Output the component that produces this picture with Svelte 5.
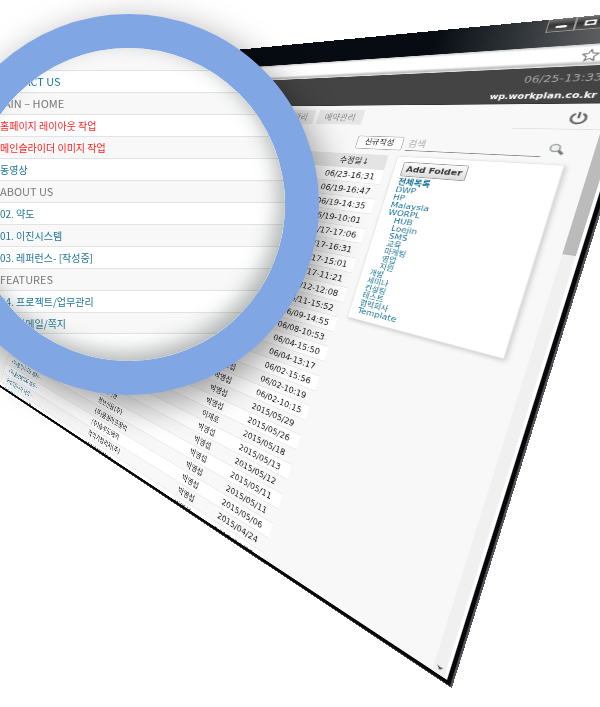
<script>
  // Maps a flat w x h plane onto four corners and returns a CSS matrix3d.
  function project(w, h, [x0, y0], [x1, y1], [x2, y2], [x3, y3]) {
    const dx1 = x1 - x2, dx2 = x3 - x2, sx = x0 - x1 + x2 - x3;
    const dy1 = y1 - y2, dy2 = y3 - y2, sy = y0 - y1 + y2 - y3;
    const det = dx1 * dy2 - dx2 * dy1;
    const g = (sx * dy2 - dx2 * sy) / det;
    const k = (dx1 * sy - sx * dy1) / det;
    const m = [
      (x1 - x0 + g * x1) / w, (y1 - y0 + g * y1) / w, 0, g / w,
      (x3 - x0 + k * x3) / h, (y3 - y0 + k * y3) / h, 0, k / h,
      0, 0, 1, 0,
      x0, y0, 0, 1
    ];
    return `matrix3d(${m.map((n) => n.toFixed(9)).join(',')})`;
  }

  const tilt = project(1220, 790, [27, 70], [662, 9], [450, 686], [-60, 347]);

  const dates = [
    '06/23-16:31', '06/19-16:47', '06/19-14:35', '06/19-10:01', '06/17-17:06',
    '06/17-16:31', '06/17-15:01', '06/17-11:21', '06/12-12:08', '06/11-15:52',
    '06/09-14:55', '06/08-10:53', '06/04-15:50', '06/04-13:17', '06/02-15:56',
    '06/02-10:19', '06/02-10:15', '2015/05/29', '2015/05/26', '2015/05/18',
    '2015/05/13', '2015/05/12', '2015/05/11', '2015/05/11', '2015/05/06',
    '2015/04/24', '2015/04/22'
  ];
  const firms = { 21: '(주)기영', 22: '정보신용(주)', 23: '(주)홍경마포장비', 24: '(주)솔루도메카', 25: '학익기정리지(주)', 26: '(주)아이엠에스' };
  const links = { 23: '(주)창기사이트 제작···', 24: '(주)홍보페이지 제작··', 25: '학익기정리지 제작···', 26: '홈페이지 리뉴얼 제작' };
  const rows = dates.map((date, i) => ({
    date,
    link: links[i] ?? '',
    firm: firms[i] ?? '',
    author: i < 14 ? '' : i === 19 ? '이재호' : '박영섭'
  }));

  const folders = [
    ['전체목록', 'all'], ['DWP'], ['HP'], ['Malaysia'], ['WORPL'],
    ['HUB', 'sub'], ['Loejin', 'sub'], ['SMS', 'sub'], ['교육', 'sub ko'],
    ['마케팅', 'sub ko'], ['영업', 'sub ko'], ['지원', 'sub ko'],
    ['개발', 'ko'], ['세미나', 'ko'], ['컨설팅', 'ko'], ['테스트', 'ko'], ['협력회사', 'ko'], ['Template']
  ];

  const zoomed = [
    ['CONTACT US', 'link latin out'],
    ['MAIN – HOME', 'head out'],
    ['홈페이지 레이아웃 작업', 'hot'],
    ['메인슬라이더 이미지 작업', 'hot'],
    ['동영상', 'link'],
    ['ABOUT US', 'head'],
    ['02. 약도', 'link'],
    ['01. 이진시스템', 'link'],
    ['03. 레퍼런스- [작성중]', 'link'],
    ['FEATURES', 'head'],
    ['04. 프로젝트/업무관리', 'link'],
    ['05. 이메일/쪽지', 'link']
  ];
</script>

<main class="scene">
  <section class="window" style:transform={tilt}>
    <header class="titlebar">
      <button class="win" aria-label="Minimize"><svg viewBox="0 0 26 15"><rect x="8" y="8" width="11" height="3" fill="#fff" /></svg></button>
      <button class="win" aria-label="Maximize"><svg viewBox="0 0 26 15"><rect x="9" y="5" width="9" height="5" fill="none" stroke="#fff" stroke-width="2" /></svg></button>
      <button class="win" aria-label="Close"></button>
    </header>
    <div class="toolbar">
      <svg class="star" viewBox="0 0 16 16"><path d="M8 1.2l2.1 4.5 4.9.6-3.6 3.4.9 4.9L8 12.2l-4.3 2.4.9-4.9L1 6.3l4.9-.6z" fill="#fff" stroke="#777" stroke-width="1.2" /></svg>
    </div>
    <div class="page">
      <div class="content">
        <div class="banner">
          <time>06/25-13:33</time>
          <strong>wp.workplan.co.kr</strong>
        </div>
        <nav class="tabs">
          <a href="#task">업무관리</a>
          <a href="#booking">예약관리</a>
          <div class="account">
            <button class="power" aria-label="Power">
              <svg viewBox="0 0 16 16"><path d="M5 3.2a6 5.6 0 1 0 6 0M8 1v7" fill="none" stroke="#666" stroke-width="2" /></svg>
            </button>
          </div>
        </nav>
        <div class="search">
          <button class="new">신규작성</button>
          <input aria-label="검색" placeholder="검색" />
          <svg viewBox="0 0 16 16"><path d="M10 9l4.500 4.500" stroke="#777" stroke-width="3" /><circle cx="6.500" cy="6" r="4.500" fill="#eef1f3" stroke="#999" stroke-width="1.500" /></svg>
        </div>
        <div class="body">
          <table>
            <thead><tr><th class="c1"></th><th class="c2"></th><th class="c3"></th><th class="c4">수정일↓</th></tr></thead>
            <tbody>
              {#each rows as row}
                <tr>
                  <td class="c1"><a href="#item">{row.link}</a></td>
                  <td class="c2">{row.firm}</td>
                  <td class="c3">{row.author}</td>
                  <td class="c4">{row.date}</td>
                </tr>
              {/each}
            </tbody>
          </table>
          <aside>
            <button class="add">Add Folder</button>
            <ul>
              {#each folders as [name, kind]}
                <li class={kind}><a href="#folder">{name}</a></li>
              {/each}
            </ul>
          </aside>
        </div>
      </div>
      <div class="scroll">
        <div class="thumb"></div>
        <svg viewBox="0 0 12 12"><path d="M3 3l3 1 3-1-3 4z" fill="#444" /></svg>
      </div>
    </div>
  </section>

  <section class="lens">
    <ul>
      {#each zoomed as [text, kind]}
        <li class={kind}>{text}</li>
      {/each}
    </ul>
  </section>
</main>

<style>
  :global(body) { margin: 0; background: #fff; }
  .scene {
    position: relative;
    min-height: 707px;
    overflow: hidden;
    font-family: 'DejaVu Sans', 'Noto Sans CJK KR', sans-serif;
    font-size: 12px;
    color: #222;
  }
  ul { list-style: none; margin: 0; padding: 0; }
  a { color: inherit; text-decoration: none; }
  button { font: inherit; color: inherit; padding: 0; margin: 0; }

  .window {
    position: absolute;
    top: 0;
    left: 0;
    box-sizing: border-box;
    width: 1220px;
    height: 790px;
    display: flex;
    flex-direction: column;
    overflow: hidden;
    transform-origin: 0 0;
    background: #f8f8f8;
    border: solid #05070a;
    border-width: 0 4px 4px 0;
    box-shadow: 2px 1px #555;
  }
  .titlebar {
    flex: none;
    height: 36px;
    display: flex;
    justify-content: flex-end;
    align-items: flex-start;
    padding-right: 14px;
    background: linear-gradient(90deg, #070c12 82%, #30353a 90%, #666 98%);
  }
  .win {
    box-sizing: border-box;
    width: 27px;
    height: 17px;
    border: 1px solid #999;
    border-top: 0;
    background: linear-gradient(#777, #333 50%, #555);
  }
  .win svg { display: block; width: 25px; height: 15px; }
  .toolbar {
    flex: none;
    box-sizing: border-box;
    height: 27px;
    display: flex;
    justify-content: flex-end;
    align-items: center;
    padding-right: 37px;
    background: linear-gradient(#ccc, #fff 15%, #fff 75%, #bbb 90%, #eee);
  }
  .star { width: 16px; height: 16px; }
  .page { flex: 1; display: flex; min-height: 0; border-right: 3px solid #fff; }
  .content { flex: 1; min-width: 0; }
  .banner {
    box-sizing: border-box;
    height: 47px;
    margin-right: -15px;
    padding: 4px 28px 0 0;
    text-align: right;
    background: #444;
    border-bottom: 1px solid #333;
    line-height: 22px;
    color: #aaa;
  }
  .banner time, .banner strong { display: block; }
  .banner strong { font-size: 10px; color: #fff; }
  .tabs {
    display: flex;
    align-items: center;
    gap: 6px;
    height: 28px;
    padding: 4px 0 0 786px;
  }
  .tabs a {
    width: 70px;
    line-height: 23px;
    text-align: center;
    font-size: 13px;
    color: #888;
    background: #e6e6e6;
  }
  .account {
    display: flex;
    justify-content: flex-end;
    align-items: center;
    box-sizing: border-box;
    width: 84px;
    height: 28px;
    margin-left: auto;
    padding-right: 14px;
    border-bottom: 1px solid #e0e0e0;
  }
  .power { width: 18px; height: 18px; border: 0; background: none; }
  .power svg { display: block; width: 18px; height: 18px; }
  .search {
    display: flex;
    align-items: center;
    gap: 5px;
    padding: 15px 0 8px 934px;
  }
  .new {
    box-sizing: border-box;
    width: 64px;
    height: 20px;
    line-height: 16px;
    border: 1px solid #aaa;
    border-radius: 3px;
    background: #fff;
    font-size: 11px;
  }
  .search input {
    box-sizing: border-box;
    width: 151px;
    height: 20px;
    padding: 0 2px;
    border: 0;
    border-bottom: 1px solid #888;
    background: none;
    font: inherit;
  }
  .search input::placeholder { color: #aaa; }
  .search svg { width: 16px; height: 16px; }
  .body { display: flex; align-items: flex-start; gap: 12px; padding-left: 295px; }
  table {
    flex: none;
    table-layout: fixed;
    width: 689px;
    border-collapse: separate;
    border-spacing: 0;
    border-left: 1px solid #ddd;
  }
  th, td { box-sizing: border-box; height: 22px; padding: 0; text-align: left; line-height: 20px; white-space: nowrap; }
  th { background: #e4e4e4; font-weight: 400; }
  td { border-bottom: 1px solid #e5e5e5; }
  tbody tr:nth-child(odd) { background: #fff; }
  td.c1 { color: #1b7598; }
  .c1 { width: 304px; padding-left: 18px; }
  .c2 { width: 223px; }
  .c3 { width: 78px; }
  .c4 { width: 83px; }
  th.c4 { padding-left: 16px; }
  aside {
    box-sizing: border-box;
    width: 183px;
    height: 238px;
    padding: 7px 10px;
    background: #fff;
    border: 1px solid #e6e6e6;
    box-shadow: 2px 2px 5px #ccc;
    font-size: 11px;
    color: #1b7598;
  }
  .add {
    display: block;
    box-sizing: border-box;
    width: 78px;
    height: 21px;
    margin-bottom: 3px;
    border: 1px solid #999;
    border-radius: 2px;
    background: linear-gradient(#fafafa, #ddd);
    font-weight: 700;
    color: #333;
  }
  li { white-space: nowrap; }
  aside li { height: 11px; line-height: 11px; }
  .all { font-weight: 700; }
  .sub { padding-left: 10px; }
  .ko { font-size: 10px; }
  .scroll {
    flex: none;
    width: 12px;
    display: flex;
    flex-direction: column;
    justify-content: space-between;
    background: #f0f0f0;
    margin-top: 47px;
  }
  .thumb { height: 180px; background: #bbb; }
  .scroll svg { display: block; width: 12px; height: 12px; }

  .lens {
    position: absolute;
    left: -62px;
    top: 14px;
    box-sizing: border-box;
    width: 381px;
    height: 381px;
    border: 34px solid #81a6e4;
    border-radius: 50%;
    background: #fff;
    box-shadow: 6px 10px 36px rgba(0, 0, 0, 0.4);
  }
  .lens ul {
    height: 313px;
    box-sizing: border-box;
    padding-top: 22px;
    border-radius: 50%;
    overflow: hidden;
    background: linear-gradient(#f8f8f8 22px, #fff 22px);
    font-family: 'Noto Sans CJK KR', sans-serif;
    font-size: 10px;
  }
  .lens li {
    box-sizing: border-box;
    height: 22px;
    padding-left: 28px;
    line-height: 21px;
    border-top: 1px solid #e2e2e2;
  }
  .lens li:last-child { border-bottom: 1px solid #e2e2e2; }
  .lens li:nth-child(even) { background: #f8f8f8; }
  .lens .link { color: #217799; }
  .lens .hot { color: #f22; }
  .lens .head { font-size: 11px; color: #777; }
  .lens .latin { font-size: 11px; }
  .lens .out { padding-left: 23px; }
  .lens::after {
    content: '';
    position: absolute;
    inset: 0;
    border-radius: 50%;
    box-shadow: inset -6px -8px 20px rgba(60, 75, 70, 0.4);
    pointer-events: none;
  }
</style>
